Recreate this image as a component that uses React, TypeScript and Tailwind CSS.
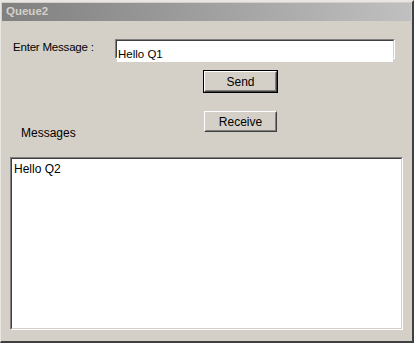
import React, { useState } from 'react';

const font = { fontFamily: '"Liberation Sans", Arial, sans-serif' };

function Win95Button({ label, isDefault }: { label: string; isDefault?: boolean }) {
  return (
    <button
      className={`w-[75px] h-[23px] bg-[#d4d0c8] text-[12px] text-black ${
        isDefault ? 'border border-black' : 'border border-transparent'
      }`}
      style={font}
    >
      <div className="w-full h-full border border-t-white border-l-white border-r-[#404040] border-b-[#404040]">
        <div className="w-full h-full flex items-center justify-center border border-t-[#d4d0c8] border-l-[#d4d0c8] border-r-[#808080] border-b-[#808080]">
          {label}
        </div>
      </div>
    </button>
  );
}

export default function App() {
  const [message, setMessage] = useState('Hello Q1');

  return (
    <div
      className="w-[414px] h-[343px] bg-[#d4d0c8] flex flex-col border-t-[2px] border-t-[#e8e6e0] border-l border-l-[#e8e6e0] border-r-2 border-r-[#404040] border-b-2 border-b-[#404040] text-black"
      style={font}
    >
      <div className="h-[18px] mx-[1px] mt-[1px] flex items-center px-[4px] bg-gradient-to-r from-[#808080] to-[#c0c0c0]">
        <span className="text-[11.5px] font-bold text-[#d4d0c8]">Queue2</span>
      </div>

      <div className="flex items-center mt-[18px]">
        <span className="ml-[12px] w-[102px] text-[11.5px] tracking-[-0.2px] mt-[-3px]">Enter Message :</span>
        <div className="w-[280px] h-[20px] border border-t-[#808080] border-l-[#808080] border-r-white border-b-white">
          <div className="w-full h-full bg-white border border-t-[#404040] border-l-[#404040] border-r-[#d4d0c8] border-b-[#d4d0c8]">
            <input
              value={message}
              onChange={(e) => setMessage(e.target.value)}
              className="w-full h-full px-[1px] text-[11.5px] outline-none bg-white"
              style={font}
            />
          </div>
        </div>
      </div>

      <div className="flex flex-col ml-[202px] mt-[11px] gap-[17px]">
        <Win95Button label="Send" isDefault />
        <Win95Button label="Receive" />
      </div>

      <div className="ml-[20px] mt-[-9px] text-[12px]">Messages</div>

      <div className="ml-[9px] mt-[15px] w-[393px] h-[173px] border border-t-[#808080] border-l-[#808080] border-r-white border-b-white">
        <div className="w-full h-full bg-white border border-t-[#404040] border-l-[#404040] border-r-[#d4d0c8] border-b-[#d4d0c8] px-[2px] pt-[1px] text-[12px]">
          Hello Q2
        </div>
      </div>
    </div>
  );
}
